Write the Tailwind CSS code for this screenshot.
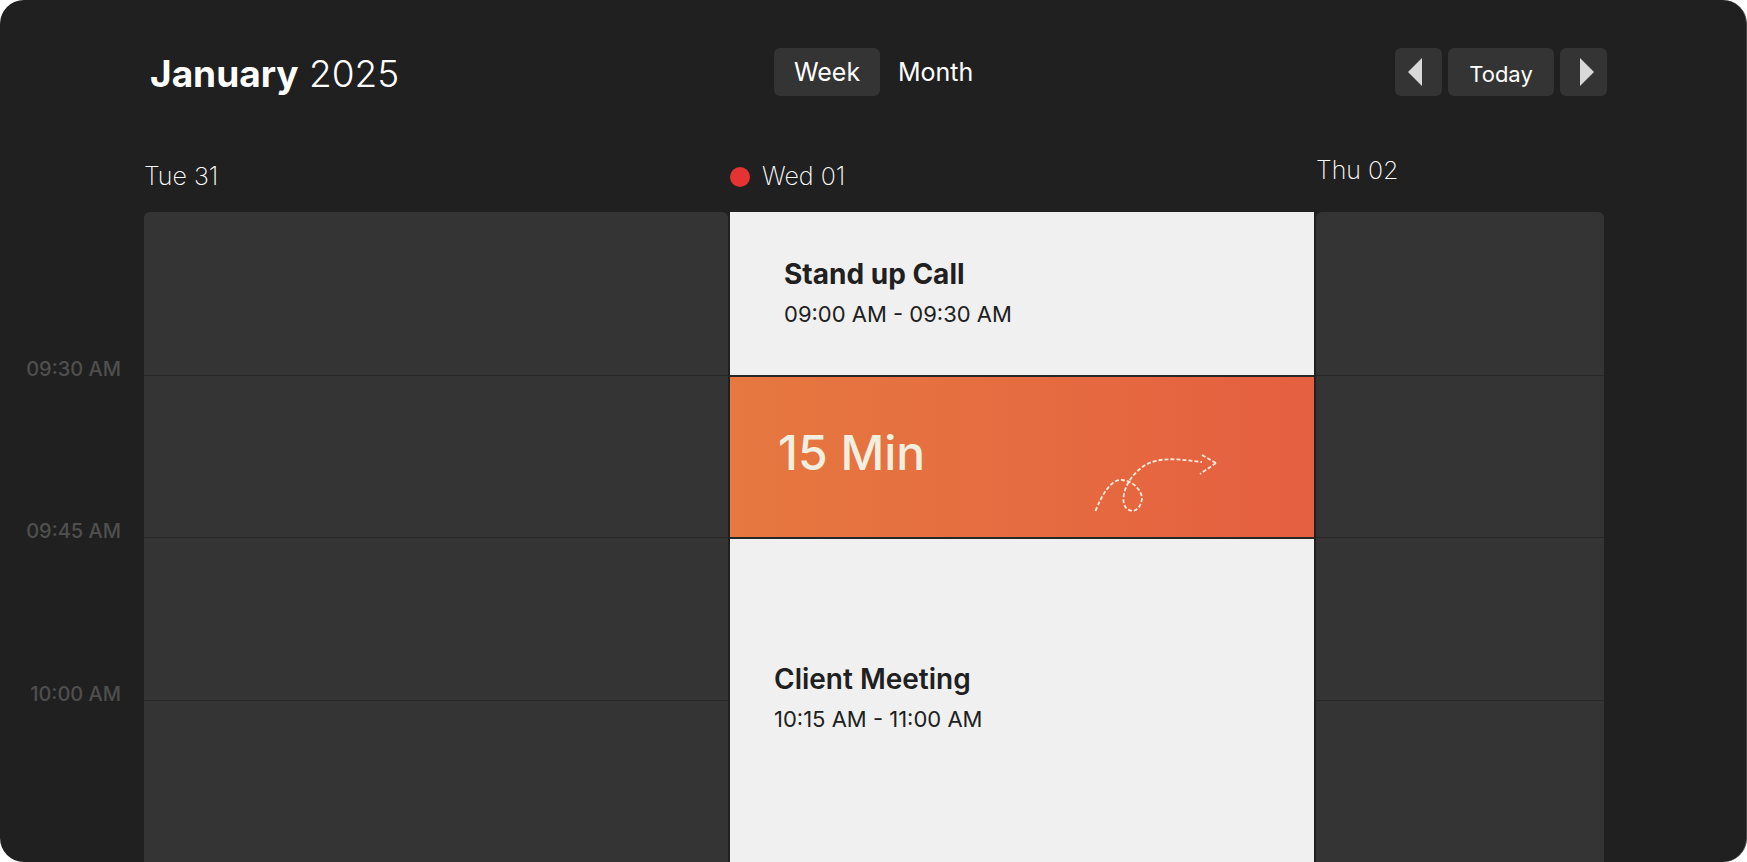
<!DOCTYPE html>
<html lang="en">
<head>
<meta charset="utf-8">
<meta name="viewport" content="width=device-width, initial-scale=1">
<title>Calendar</title>
<script src="https://cdn.jsdelivr.net/npm/@tailwindcss/browser@4"></script>
</head>
<body class="bg-white font-['Inter',sans-serif]">
<main class="flex min-h-screen flex-col overflow-hidden rounded-3xl border-r border-[#4a4a4a] bg-[#202020] text-white">
  <header class="grid grid-cols-[624fr_833fr] items-center pt-12 pr-[139px] pl-[150px]">
    <h1 class="h-12 pt-0.5 text-[37px] leading-12 font-light"><span class="font-bold">January</span> 2025</h1>
    <div class="flex items-center justify-between">
      <nav class="flex text-[25px] leading-12" aria-label="View">
        <button type="button" class="h-12 w-[106px] rounded-md bg-[#343434]" aria-pressed="true">Week</button>
        <button type="button" class="h-12 px-[18px]" aria-pressed="false">Month</button>
      </nav>
      <div class="flex gap-1.5 text-[22px]">
        <button type="button" class="grid h-12 w-[47px] place-items-center rounded-md bg-[#343434]" aria-label="Previous">
          <svg class="mr-2 h-7 w-3.5" viewBox="0 0 14 28" fill="#d9d9d9"><path d="M14 0V28L0 14Z"/></svg>
        </button>
        <button type="button" class="h-12 w-[106px] rounded-md bg-[#343434] pt-1">Today</button>
        <button type="button" class="grid h-12 w-[47px] place-items-center rounded-md bg-[#343434]" aria-label="Next">
          <svg class="ml-1.5 h-7 w-3.5" viewBox="0 0 14 28" fill="#d9d9d9"><path d="M0 0V28L14 14Z"/></svg>
        </button>
      </div>
    </div>
  </header>

  <div class="mt-16 grid h-[52px] grid-cols-[142px_584fr_584fr_288fr] gap-x-0.5 pr-[142px] text-[25px] leading-8 font-extralight">
    <h2 class="col-start-2">Tue 31</h2>
    <h2 class="flex items-center gap-3 self-start"><span class="mt-0.5 size-5 rounded-full bg-[#e53333]"></span>Wed 01</h2>
    <h2 class="-mt-1.5">Thu 02</h2>
  </div>

  <div class="grid flex-1 grid-cols-[142px_584fr_584fr_288fr] gap-x-0.5 pr-[142px]">
    <div class="grid grid-rows-4 pr-[21px] text-right text-xl leading-7 font-medium text-[#4f4f4f]">
      <div class="flex items-end justify-end"><time class="-mb-2">09:30 AM</time></div>
      <div class="flex items-end justify-end"><time class="-mb-2">09:45 AM</time></div>
      <div class="flex items-end justify-end"><time class="-mb-2">10:00 AM</time></div>
      <div></div>
    </div>

    <div class="grid grid-rows-4 overflow-hidden rounded-t-md bg-[#343434]">
      <div></div>
      <div class="border-t border-[#272727]"></div>
      <div class="border-t border-[#272727]"></div>
      <div class="border-t border-[#272727]"></div>
    </div>

    <div class="grid grid-rows-4 text-[#202020]">
      <article class="flex flex-col justify-center bg-[#f0f0f0] pt-0.5 pl-[54px]">
        <h3 class="text-[28px] leading-10 font-bold">Stand up Call</h3>
        <p class="text-[22px] leading-10">09:00 AM - 09:30 AM</p>
      </article>
      <article class="flex items-center justify-between border-t-2 border-[#272727] bg-linear-to-r from-[#e67840] to-[#e55f40] pr-[97px] pb-2 pl-12">
        <h3 class="text-5xl font-medium text-[#f1efdf]">15 Min</h3>
        <svg class="mt-15 h-15 w-[123px]" viewBox="0 0 123 60" fill="none" stroke="#fbeadb" stroke-width="1.8" stroke-dasharray="4 2">
          <path d="M1.500 58C9 39 18 26 28 27C40 28 48 38 48 46C47 53 43 58 38 58C32 57 29 52 29.500 45C30 33 41 15 58 9C73 4 91 7 108 9"/>
          <path d="M108 2L122 10"/>
          <path d="M122 10L106 21"/>
        </svg>
      </article>
      <article class="row-span-2 flex flex-col justify-center border-t-2 border-[#272727] bg-[#f0f0f0] pb-1 pl-11">
        <h3 class="text-[28px] leading-10 font-semibold">Client Meeting</h3>
        <p class="text-[22px] leading-10">10:15 AM - 11:00 AM</p>
      </article>
    </div>

    <div class="grid grid-rows-4 overflow-hidden rounded-t-md bg-[#343434]">
      <div></div>
      <div class="border-t border-[#272727]"></div>
      <div class="border-t border-[#272727]"></div>
      <div class="border-t border-[#272727]"></div>
    </div>
  </div>
</main>
</body>
</html>
